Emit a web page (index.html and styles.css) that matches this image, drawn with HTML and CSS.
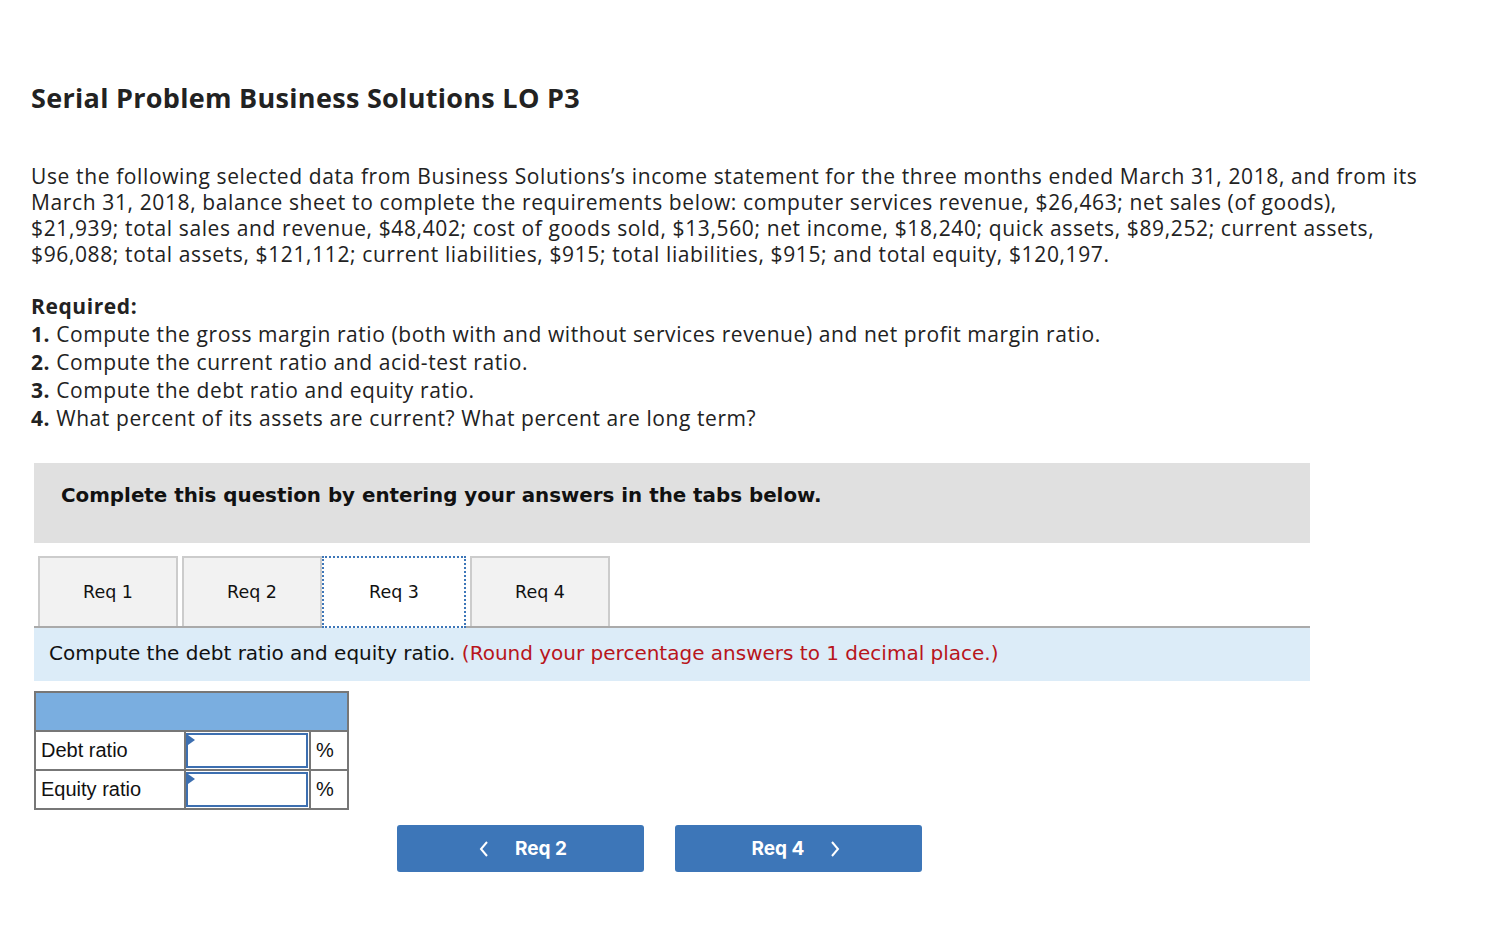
FILE: index.html
```html
<!DOCTYPE html>
<html>
<head>
<meta charset="utf-8">
<link rel="stylesheet" href="styles.css">
</head>
<body>
<div class="page">
  <h1 class="title">Serial Problem Business Solutions LO P3</h1>
  <p class="intro">Use the following selected data from Business Solutions’s income statement for the three months ended March 31, 2018, and from its March 31, 2018, balance sheet to complete the requirements below: computer services revenue, $26,463; net sales (of goods), $21,939; total sales and revenue, $48,402; cost of goods sold, $13,560; net income, $18,240; quick assets, $89,252; current assets, $96,088; total assets, $121,112; current liabilities, $915; total liabilities, $915; and total equity, $120,197.</p>
  <div class="required">
    <div class="req-head">Required:</div>
    <div class="req-item"><b>1.</b> Compute the gross margin ratio (both with and without services revenue) and net profit margin ratio.</div>
    <div class="req-item"><b>2.</b> Compute the current ratio and acid-test ratio.</div>
    <div class="req-item"><b>3.</b> Compute the debt ratio and equity ratio.</div>
    <div class="req-item"><b>4.</b> What percent of its assets are current? What percent are long term?</div>
  </div>
  <div class="panel">
    <div class="banner">Complete this question by entering your answers in the tabs below.</div>
    <div class="tabs">
      <div class="tab">Req 1</div>
      <div class="tab">Req 2</div>
      <div class="tab active">Req 3</div>
      <div class="tab">Req 4</div>
    </div>
    <div class="instr">Compute the debt ratio and equity ratio. <span class="red">(Round your percentage answers to 1 decimal place.)</span></div>
    <table class="grid">
      <tr class="hdr"><td colspan="3"></td></tr>
      <tr><td class="lbl">Debt ratio</td><td class="inp"><div class="box"><span class="tri"></span></div></td><td class="pct">%</td></tr>
      <tr><td class="lbl">Equity ratio</td><td class="inp"><div class="box"><span class="tri"></span></div></td><td class="pct">%</td></tr>
    </table>
    <div class="navs">
      <div class="btn"><svg class="chev" width="12" height="18" viewBox="0 0 12 18"><path d="M9 2 L3 9 L9 16" fill="none" stroke="#fff" stroke-width="2"/></svg><span>Req 2</span></div>
      <div class="btn"><span>Req 4</span><svg class="chev" width="12" height="18" viewBox="0 0 12 18"><path d="M3 2 L9 9 L3 16" fill="none" stroke="#fff" stroke-width="2"/></svg></div>
    </div>
  </div>
</div>
</body>
</html>
```
FILE: styles.css
```css
html, body { margin: 0; padding: 0; background: #fff; }
.page { padding: 78px 0 0 31px; width: 1420px; font-family: "Open Sans", Lato, sans-serif; color: #222; }
.title { margin: 0; font-size: 27px; font-weight: 700; line-height: 40px; color: #222; letter-spacing: 0.3px; }
.intro { margin: 45px 0 0 0; font-size: 21px; line-height: 26px; width: 1391px; letter-spacing: 0.62px; }
.required { margin-top: 25px; font-size: 21px; letter-spacing: 0.58px; }
.req-head { font-weight: 700; line-height: 28px; }
.req-item { line-height: 28px; }
.req-item b { font-weight: 700; }
.panel { margin: 31px 0 0 3px; width: 1276px; }
.banner { background: #e0e0e0; height: 80px; box-sizing: border-box; padding: 21px 0 0 27px; font-family: "DejaVu Sans", Verdana, sans-serif; font-weight: 700; font-size: 19.85px; color: #111; }
.tabs { display: flex; margin-top: 12px; padding-left: 4px; border-bottom: 2px solid #aaa; height: 71px; align-items: flex-end; }
.tab { width: 136px; height: 68px; margin-right: 4px; background: #f2f2f2; border: 2px solid #ccc; border-bottom: none; display: flex; align-items: center; justify-content: center; font-family: "DejaVu Sans", Verdana, sans-serif; font-size: 17.5px; color: #111; box-sizing: content-box; }
.tab.active { background: #fff; border: 2px dotted #3d76b8; height: 68px; margin: 0 4px 0 -4px; width: 140px; position: relative; top: 2px; }
.instr { background: #dcecf8; height: 53px; box-sizing: border-box; padding: 13px 0 0 15px; font-family: "DejaVu Sans", Verdana, sans-serif; font-size: 20px; color: #111; }
.red { color: #b8151b; }
.grid { border-collapse: collapse; margin-top: 10px; font-family: "Liberation Sans", Arial, sans-serif; font-size: 20px; color: #111; }
.grid td { border: 2px solid #777; padding: 0; height: 37px; }
.hdr td { background: #7aaee0; height: 37px; }
.lbl { width: 143px; padding-left: 5px !important; }
.inp { width: 123px; background: #fff; }
.box { position: relative; height: 35px; border: 2px solid #3d6fb0; box-sizing: border-box; margin: 0 1px 0 0; }
.tri { position: absolute; left: 0; top: 0; width: 0; height: 0; border-top: 5px solid transparent; border-bottom: 5px solid transparent; border-left: 7px solid #3d6fb0; }
.pct { width: 31px; padding-left: 5px !important; }
.navs { display: flex; gap: 31px; margin: 15px 0 0 363px; }
.btn { width: 247px; height: 47px; background: #3d76b8; border-radius: 3px; color: #fff; display: flex; align-items: center; justify-content: center; gap: 25px; font-family: Inter, Roboto, sans-serif; font-weight: 700; font-size: 19px; }
.btn:first-child { padding-left: 4px; box-sizing: border-box; }
.btn:last-child { padding-right: 4px; box-sizing: border-box; }
.chev { display: block; }
```
